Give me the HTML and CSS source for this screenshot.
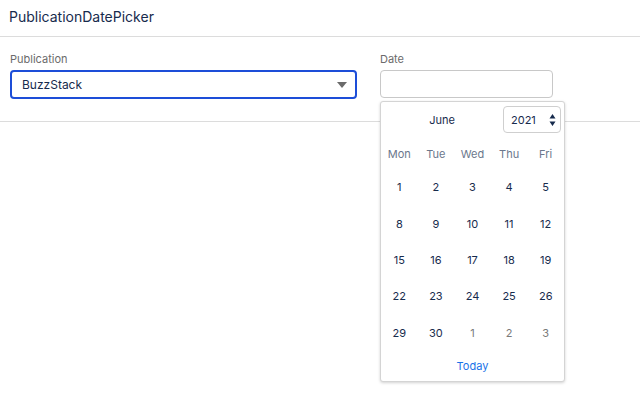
FILE: index.html
```html
<!DOCTYPE html>
<html>
<head>
<meta charset="utf-8">
<link rel="stylesheet" href="styles.css">
</head>
<body>
<header class="top">PublicationDatePicker</header>
<section class="form">
  <div class="field pub">
    <label class="label">Publication</label>
    <div class="select">
      <span>BuzzStack</span>
      <svg class="caret" width="10" height="6" viewBox="0 0 10 6"><path d="M0 0H10L5 6Z" fill="#6b6b6b"/></svg>
    </div>
  </div>
  <div class="field date">
    <label class="label">Date</label>
    <div class="input"></div>
    <div class="popup">
      <div class="head">
        <span class="month">June</span>
        <div class="year">
          <span>2021</span>
          <svg class="spin" width="7" height="14" viewBox="0 0 7 14"><path d="M3.5 1L6.5 5.5H0.5Z M3.5 13L6.5 8.5H0.5Z" fill="#172b4d"/></svg>
        </div>
      </div>
      <div class="grid">
        <span class="wd">Mon</span><span class="wd">Tue</span><span class="wd">Wed</span><span class="wd">Thu</span><span class="wd">Fri</span>
        <span class="d">1</span><span class="d">2</span><span class="d">3</span><span class="d">4</span><span class="d">5</span>
        <span class="d">8</span><span class="d">9</span><span class="d">10</span><span class="d">11</span><span class="d">12</span>
        <span class="d">15</span><span class="d">16</span><span class="d">17</span><span class="d">18</span><span class="d">19</span>
        <span class="d">22</span><span class="d">23</span><span class="d">24</span><span class="d">25</span><span class="d">26</span>
        <span class="d">29</span><span class="d">30</span><span class="d o">1</span><span class="d o">2</span><span class="d o">3</span>
      </div>
      <div class="today">Today</div>
    </div>
  </div>
</section>
</body>
</html>
```
FILE: styles.css
```css
* { box-sizing: border-box; }
html, body { margin: 0; padding: 0; background: #fff; }
body { font-family: Inter, "Noto Sans", sans-serif; color: #172b4d; min-height: 397px; }
.top {
  height: 37px;
  padding: 8px 0 0 9px;
  font-size: 14px;
  line-height: 17px;
  border-bottom: 1px solid #dcdcdc;
}
.form {
  display: flex;
  gap: 23px;
  padding: 15px 0 0 10px;
  height: 85px;
  border-bottom: 1px solid #dcdcdc;
}
.field { display: flex; flex-direction: column; position: relative; }
.label { font-size: 11px; line-height: 14px; color: #6b6b6b; margin-bottom: 4px; }
.select {
  width: 347px; height: 29px;
  border: 2px solid #1d4ed8;
  border-radius: 4px;
  display: flex; align-items: center; justify-content: space-between;
  padding: 0 8px 0 10px;
  font-size: 12px;
}
.input {
  width: 173px; height: 28px;
  border: 1px solid #c8c8c8;
  border-radius: 4px;
}
.popup {
  position: absolute;
  top: 49px; left: 0;
  width: 185px;
  background: #fff;
  border: 1px solid #d4d4d4;
  border-radius: 3px;
  box-shadow: 0 1px 3px rgba(0,0,0,0.18);
  font-size: 11px;
  z-index: 5;
}
.head { display: flex; align-items: center; padding: 4px 3px 6px 0; }
.month { flex: 1; text-align: center; font-size: 11px; }
.year {
  width: 58px; height: 27px;
  border: 1px solid #cfcfcf;
  border-radius: 4px;
  display: flex; align-items: center; justify-content: space-between;
  padding: 0 4px 0 7px;
  font-size: 11px;
}
.grid { display: grid; grid-template-columns: repeat(5, 1fr); grid-template-rows: 30px repeat(5, 36.4px); }
.grid span { display: flex; align-items: center; justify-content: center; }
.wd { color: #6b778c; }
.o { color: #7a7a7a; }
.today { height: 30px; display: flex; align-items: center; justify-content: center; color: #1a73e8; }
```
